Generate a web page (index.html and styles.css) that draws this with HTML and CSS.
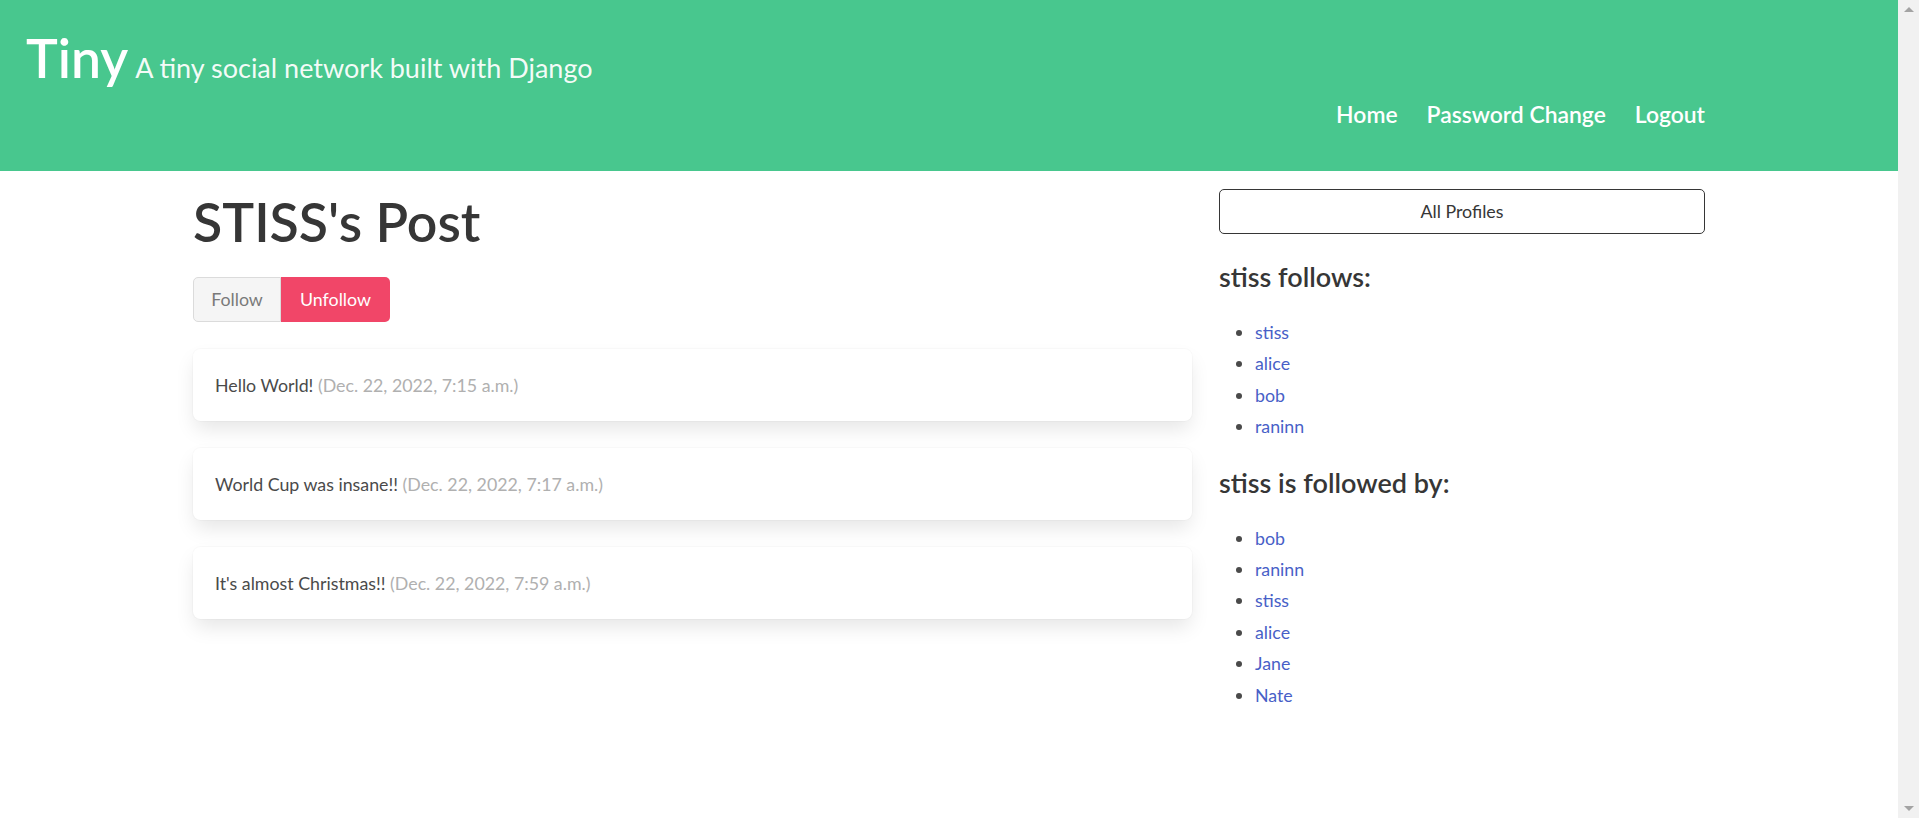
FILE: index.html
```html
<!DOCTYPE html>
<html lang="en">
<head>
<meta charset="utf-8">
<title>Tiny</title>
<link rel="stylesheet" href="styles.css">
</head>
<body>
<div class="page">
  <header class="hero">
    <div class="brand">
      <span class="brand-title">Tiny</span>
      <span class="brand-sub">A tiny social network built with Django</span>
    </div>
    <nav class="nav">
      <a href="#">Home</a>
      <a href="#">Password Change</a>
      <a href="#">Logout</a>
    </nav>
  </header>
  <main class="columns">
    <section class="col-main">
      <h1 class="page-title">STISS's Post</h1>
      <div class="buttons">
        <button class="btn btn-static">Follow</button>
        <button class="btn btn-danger">Unfollow</button>
      </div>
      <div class="posts">
        <div class="box"><p>Hello World! <span class="date">(Dec. 22, 2022, 7:15 a.m.)</span></p></div>
        <div class="box"><p>World Cup was insane!! <span class="date">(Dec. 22, 2022, 7:17 a.m.)</span></p></div>
        <div class="box"><p>It's almost Christmas!! <span class="date">(Dec. 22, 2022, 7:59 a.m.)</span></p></div>
      </div>
    </section>
    <aside class="col-side">
      <a class="btn-outline" href="#">All Profiles</a>
      <h3 class="side-title">stiss follows:</h3>
      <ul class="people">
        <li><a href="#">stiss</a></li>
        <li><a href="#">alice</a></li>
        <li><a href="#">bob</a></li>
        <li><a href="#">raninn</a></li>
      </ul>
      <h3 class="side-title second">stiss is followed by:</h3>
      <ul class="people">
        <li><a href="#">bob</a></li>
        <li><a href="#">raninn</a></li>
        <li><a href="#">stiss</a></li>
        <li><a href="#">alice</a></li>
        <li><a href="#">Jane</a></li>
        <li><a href="#">Nate</a></li>
      </ul>
    </aside>
  </main>
</div>
<div class="scrollbar"><span class="arrow up"></span><span class="arrow down"></span></div>
</body>
</html>
```
FILE: styles.css
```css
html, body {
  height: 100%;
  margin: 0;
  overflow: hidden;
}
body {
  display: flex;
  font-family: Lato, "Open Sans", sans-serif;
  font-size: 17.8px;
  color: #4a4a4a;
  background: #fff;
}
.page {
  flex: 1;
  min-width: 0;
}
.scrollbar {
  width: 21px;
  flex: 0 0 21px;
  background: #f1f1f1;
  display: flex;
  flex-direction: column;
  justify-content: space-between;
  align-items: center;
}
.arrow {
  width: 0;
  height: 0;
  border-left: 5px solid transparent;
  border-right: 5px solid transparent;
}
.arrow.up {
  margin-top: 7px;
  border-bottom: 5px solid #a3a3a3;
}
.arrow.down {
  margin-bottom: 7px;
  border-top: 5px solid #a3a3a3;
}

/* header */
.hero {
  background: #48c78e;
  height: 171px;
  box-sizing: border-box;
  padding-top: 23.5px;
}
.brand {
  display: flex;
  align-items: baseline;
  padding-left: 26px;
}
.brand-title {
  font-size: 53.5px;
  line-height: 67.5px;
  font-weight: 600;
  color: #fff;
}
.brand-sub {
  font-size: 27px;
  line-height: 37.5px;
  color: rgba(255, 255, 255, 0.95);
  margin-left: 7px;
}
.nav {
  width: 1512px;
  margin: 7.5px auto 0;
  display: flex;
  justify-content: flex-end;
  gap: 29px;
}
.nav a {
  color: #fff;
  font-size: 22.9px;
  line-height: 30px;
  font-weight: 600;
  text-decoration: none;
}

/* content */
.columns {
  width: 1512px;
  margin: 0 auto;
  display: grid;
  grid-template-columns: 999px 486px;
  column-gap: 27px;
}
.col-main {
  padding-top: 16.5px;
}
.page-title {
  margin: 0 0 22px;
  font-size: 53.6px;
  line-height: 67.5px;
  font-weight: 600;
  color: #363636;
}
.buttons {
  display: flex;
  margin-bottom: 27px;
}
.btn {
  height: 45px;
  box-sizing: border-box;
  padding: 0;
  font-family: inherit;
  font-size: 17.8px;
  line-height: 43px;
  text-align: center;
  border: 1px solid transparent;
}
.btn-static {
  width: 88px;
  background: #f5f5f5;
  border-color: #dbdbdb;
  color: #7a7a7a;
  border-radius: 5px 0 0 5px;
}
.btn-danger {
  width: 109px;
  background: #f14668;
  color: #fff;
  border-radius: 0 5px 5px 0;
}
.box {
  background: #fff;
  border-radius: 7.5px;
  box-shadow: 0 10px 20px -2.5px rgba(10, 10, 10, 0.1), 0 0 0 1px rgba(10, 10, 10, 0.02);
  padding: 21px 22px;
  margin-bottom: 27px;
}
.box p {
  margin: 0;
  line-height: 30px;
  color: #4a4a4a;
}
.date {
  color: #b0b0b0;
}

/* sidebar */
.col-side {
  padding-top: 18px;
}
.btn-outline {
  display: block;
  height: 45px;
  box-sizing: border-box;
  border: 1px solid #363636;
  border-radius: 5px;
  text-align: center;
  line-height: 43px;
  color: #363636;
  text-decoration: none;
}
.side-title {
  margin: 27px 0 24.6px;
  font-size: 27px;
  line-height: 31.25px;
  font-weight: 600;
  color: #363636;
}
.side-title.second {
  margin-top: 24.2px;
}
.people {
  margin: 0;
  padding-left: 36px;
}
.people li {
  line-height: 31.4px;
}
.people a {
  color: #485fc7;
  text-decoration: none;
}
```
